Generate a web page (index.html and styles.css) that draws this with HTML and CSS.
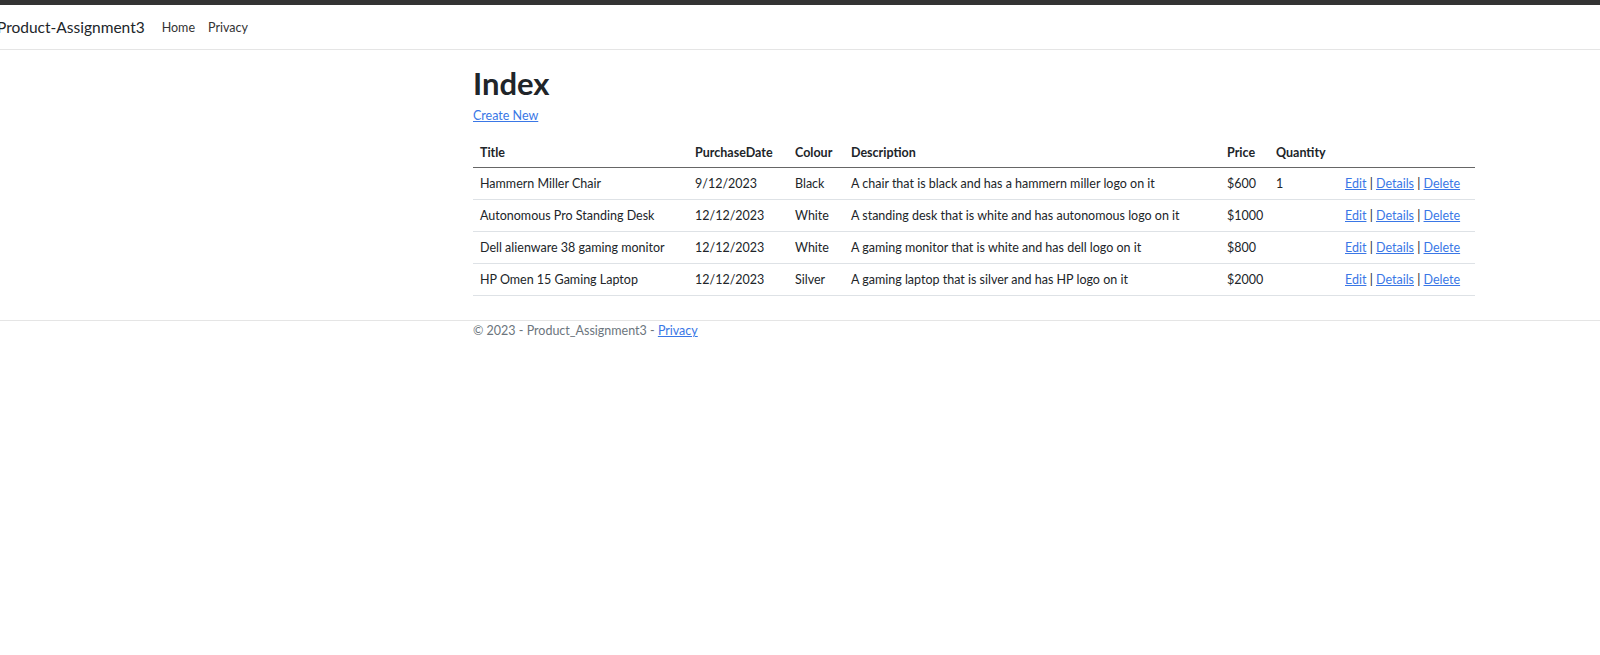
FILE: index.html
```html
<!DOCTYPE html>
<html lang="en">
<head>
<meta charset="utf-8">
<title>Index - Product_Assignment3</title>
<link rel="stylesheet" href="styles.css">
</head>
<body>
<div class="topbar"></div>
<header class="navbar">
  <a class="brand" href="#">Product-Assignment3</a>
  <nav class="nav">
    <a href="#">Home</a>
    <a href="#">Privacy</a>
  </nav>
</header>
<main class="container">
  <h1>Index</h1>
  <p class="create"><a href="#">Create New</a></p>
  <table class="table">
    <colgroup>
      <col class="c-title"><col class="c-date"><col class="c-colour"><col class="c-desc"><col class="c-price"><col class="c-qty"><col class="c-act">
    </colgroup>
    <thead>
      <tr><th>Title</th><th>PurchaseDate</th><th>Colour</th><th>Description</th><th>Price</th><th>Quantity</th><th></th></tr>
    </thead>
    <tbody>
      <tr><td>Hammern Miller Chair</td><td>9/12/2023</td><td>Black</td><td>A chair that is black and has a hammern miller logo on it</td><td>$600</td><td>1</td><td><a href="#">Edit</a> | <a href="#">Details</a> | <a href="#">Delete</a></td></tr>
      <tr><td>Autonomous Pro Standing Desk</td><td>12/12/2023</td><td>White</td><td>A standing desk that is white and has autonomous logo on it</td><td>$1000</td><td></td><td><a href="#">Edit</a> | <a href="#">Details</a> | <a href="#">Delete</a></td></tr>
      <tr><td>Dell alienware 38 gaming monitor</td><td>12/12/2023</td><td>White</td><td>A gaming monitor that is white and has dell logo on it</td><td>$800</td><td></td><td><a href="#">Edit</a> | <a href="#">Details</a> | <a href="#">Delete</a></td></tr>
      <tr><td>HP Omen 15 Gaming Laptop</td><td>12/12/2023</td><td>Silver</td><td>A gaming laptop that is silver and has HP logo on it</td><td>$2000</td><td></td><td><a href="#">Edit</a> | <a href="#">Details</a> | <a href="#">Delete</a></td></tr>
    </tbody>
  </table>
</main>
<footer class="footer">
  <div class="footer-inner">&copy; 2023 - Product_Assignment3 - <a href="#">Privacy</a></div>
</footer>
</body>
</html>
```
FILE: styles.css
```css
* { box-sizing: border-box; }
html, body { margin: 0; padding: 0; }
body {
  font-family: Lato, "Open Sans", "DejaVu Sans", sans-serif;
  font-size: 12.5px;
  color: #212529;
  background: #fff;
}
a { color: #3a77e6; }
.topbar { height: 5px; background: #333; }
.navbar {
  display: flex;
  align-items: center;
  height: 45px;
  border-bottom: 1px solid #e5e5e5;
}
.brand {
  margin-left: -3px;
  font-size: 15.5px;
  color: #212529;
  text-decoration: none;
  margin-right: 17px;
}
.nav { display: flex; gap: 13px; }
.nav a { color: #333; text-decoration: none; font-size: 12.5px; }
.container { width: 1002px; margin-left: 473px; padding-top: 15px; }
h1 { font-size: 31px; font-weight: 700; margin: 0 0 6px 0; line-height: 1.2; }
.create { margin: 0 0 14px 0; }
.table { width: 1002px; border-collapse: collapse; table-layout: fixed; }
.c-title { width: 215px; }
.c-date { width: 100px; }
.c-colour { width: 56px; }
.c-desc { width: 376px; }
.c-price { width: 49px; }
.c-qty { width: 69px; }
.c-act { width: 137px; }
.table th, .table td { padding: 6.5px 7px; text-align: left; white-space: nowrap; vertical-align: top; line-height: 18px; }
.table th { font-weight: 700; border-bottom: 1.5px solid #666; padding-top: 7px; padding-bottom: 6px; line-height: 17px; }
.table td { border-bottom: 1px solid #dee2e6; }
.footer { margin-top: 24px; border-top: 1px solid #e5e5e5; padding-top: 0; color: #6c757d; }
.footer-inner { margin-left: 473px; line-height: 20px; }
```
